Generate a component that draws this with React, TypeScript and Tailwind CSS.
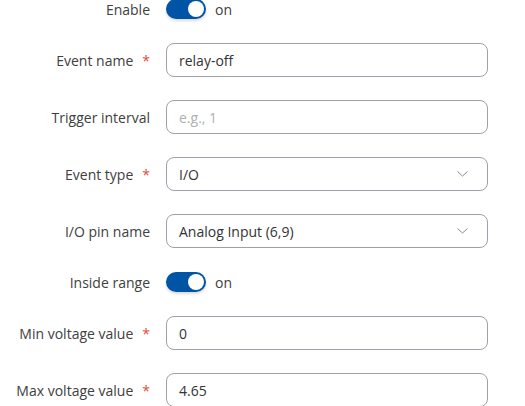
import React from "react";

function Label({ text, required }: { text: string; required?: boolean }) {
  return (
    <div className="w-[150px] shrink-0 flex justify-end items-center text-[14px] text-[#404040]">
      <span>{text}</span>
      {required && <span className="ml-[9px] text-[#e04b3c]">*</span>}
    </div>
  );
}

function Toggle() {
  return (
    <div className="flex items-center h-[22px]">
      <div className="w-[40px] h-[20px] rounded-full bg-[#0054a6] flex items-center justify-end pr-[2px] shadow-[0_2px_3px_rgba(0,0,0,0.15)]">
        <div className="w-[16px] h-[16px] rounded-full bg-white" />
      </div>
      <span className="ml-[9px] text-[14px] text-[#404040]">on</span>
    </div>
  );
}

function Input({ value, placeholder }: { value?: string; placeholder?: string }) {
  return (
    <div className="w-[322px] h-[34px] border border-[#a0a0aa] rounded-[8px] flex items-center px-3 text-[14px]">
      {value ? (
        <span className="text-[#333333]">{value}</span>
      ) : (
        <span className="text-[#b0b0b0]">{placeholder}</span>
      )}
    </div>
  );
}

function Select({ value }: { value: string }) {
  return (
    <div className="w-[322px] h-[34px] border border-[#a0a0aa] rounded-[8px] flex items-center justify-between pl-3 pr-[19px] text-[14px]">
      <span className="text-[#333333]">{value}</span>
      <svg width="11" height="6" viewBox="0 0 11 6" fill="none">
        <path d="M0.5 0.5 L5.5 5 L10.5 0.5" stroke="#8a8a8a" strokeWidth="1" />
      </svg>
    </div>
  );
}

function Row({ children }: { children: React.ReactNode }) {
  return <div className="flex items-center gap-4">{children}</div>;
}

export default function App() {
  return (
    <div className="w-[525px] h-[406px] bg-white overflow-hidden font-['Open_Sans','Noto_Sans',sans-serif]">
      <div className="flex flex-col gap-[23px] -mt-[2px]">
        <Row>
          <Label text="Enable" />
          <Toggle />
        </Row>
        <Row>
          <Label text="Event name" required />
          <Input value="relay-off" />
        </Row>
        <Row>
          <Label text="Trigger interval" />
          <Input placeholder="e.g., 1" />
        </Row>
        <Row>
          <Label text="Event type" required />
          <Select value="I/O" />
        </Row>
        <Row>
          <Label text="I/O pin name" />
          <Select value="Analog Input (6,9)" />
        </Row>
        <Row>
          <Label text="Inside range" />
          <Toggle />
        </Row>
        <Row>
          <Label text="Min voltage value" required />
          <Input value="0" />
        </Row>
        <Row>
          <Label text="Max voltage value" required />
          <Input value="4.65" />
        </Row>
      </div>
    </div>
  );
}
